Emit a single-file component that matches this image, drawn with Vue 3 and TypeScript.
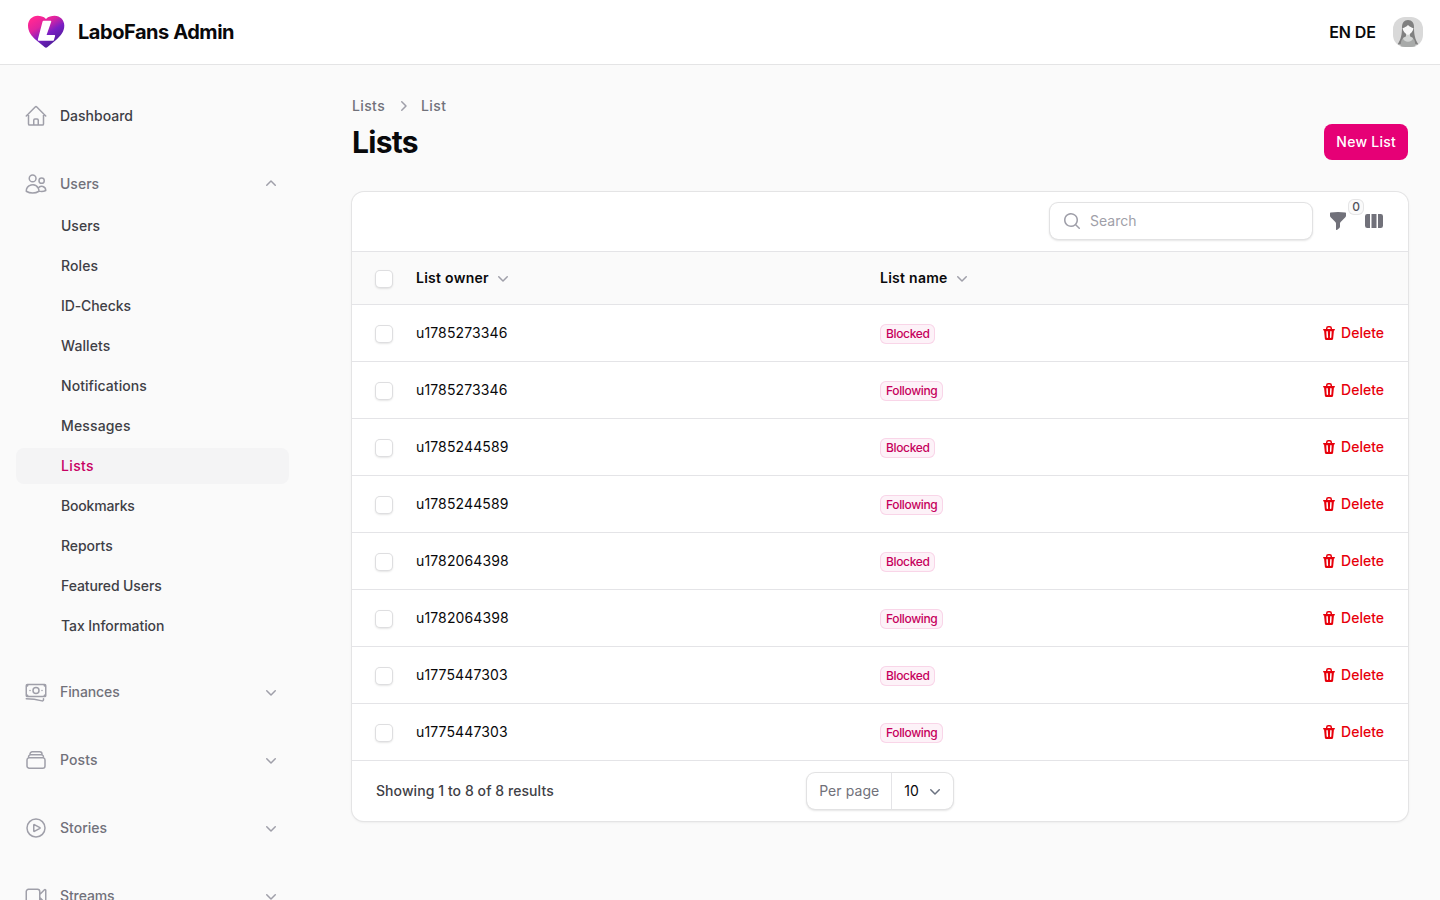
<script setup lang="ts">
interface NavItem { label: string; tracking: number }
interface Group extends NavItem { icon: string }
interface Row { owner: string; list: 'Blocked' | 'Following' }

const icons = {
  home: 'M2.25 12l8.954-8.955c.44-.439 1.152-.439 1.591 0L21.75 12M4.5 9.75v10.125c0 .621.504 1.125 1.125 1.125H9.75v-4.875c0-.621.504-1.125 1.125-1.125h2.25c.621 0 1.125.504 1.125 1.125V21h4.125c.621 0 1.125-.504 1.125-1.125V9.75M8.25 21h8.25',
  users: 'M15 19.128a9.38 9.38 0 002.625.372 9.337 9.337 0 004.121-.952 4.125 4.125 0 00-7.533-2.493M15 19.128v-.003c0-1.113-.285-2.16-.786-3.07M15 19.128v.106A12.318 12.318 0 018.624 21c-2.331 0-4.512-.645-6.374-1.766l-.001-.109a6.375 6.375 0 0111.964-3.07M12 6.375a3.375 3.375 0 11-6.75 0 3.375 3.375 0 016.75 0zm8.25 2.25a2.625 2.625 0 11-5.25 0 2.625 2.625 0 015.25 0z',
  banknotes: 'M2.25 18.75a60.07 60.07 0 0115.797 2.101c.727.198 1.453-.342 1.453-1.096V18.75M3.75 4.5v.75A.75.75 0 013 6h-.75m0 0v-.375c0-.621.504-1.125 1.125-1.125H20.25M2.25 6v9m18-10.5v.75c0 .414.336.75.75.75h.75m-1.5-1.5h.375c.621 0 1.125.504 1.125 1.125v9.75c0 .621-.504 1.125-1.125 1.125h-.375m1.5-1.5H21a.75.75 0 00-.75.75v.75m0 0H3.75m0 0h-.375a1.125 1.125 0 01-1.125-1.125V15m1.5 1.5v-.75A.75.75 0 003 15h-.75M15 10.5a3 3 0 11-6 0 3 3 0 016 0zm3 0h.008v.008H18V10.5zm-12 0h.008v.008H6V10.5z',
  stack: 'M6 6.878V6a2.25 2.25 0 012.25-2.25h7.5A2.25 2.25 0 0118 6v.878m-12 0c.235-.083.487-.128.75-.128h10.5c.263 0 .515.045.75.128m-12 0A2.25 2.25 0 004.5 9v.878m13.5-3A2.25 2.25 0 0119.5 9v.878m0 0a2.246 2.246 0 00-.75-.128H5.25c-.263 0-.515.045-.75.128m15 0A2.25 2.25 0 0121 12v6a2.25 2.25 0 01-2.25 2.25H5.25A2.25 2.25 0 013 18v-6c0-.98.626-1.813 1.5-2.122',
  play: 'M21 12a9 9 0 11-18 0 9 9 0 0118 0z M15.91 11.672a.375.375 0 010 .656l-5.603 3.113a.375.375 0 01-.557-.328V8.887c0-.286.307-.466.557-.327l5.603 3.112z',
  video: 'M15.75 10.5l4.72-4.72a.75.75 0 011.28.53v11.38a.75.75 0 01-1.28.53l-4.72-4.72M4.5 18.75h9a2.25 2.25 0 002.25-2.25v-9a2.25 2.25 0 00-2.25-2.25h-9A2.25 2.25 0 002.25 7.5v9a2.25 2.25 0 002.25 2.25z',
  down: 'M5.22 8.22a.75.75 0 011.06 0L10 11.94l3.72-3.72a.75.75 0 111.06 1.06l-4.25 4.25a.75.75 0 01-1.06 0L5.22 9.28a.75.75 0 010-1.06z',
  up: 'M9.47 6.47a.75.75 0 0 1 1.06 0l4.25 4.25a.75.75 0 1 1-1.06 1.06L10 8.06l-3.72 3.72a.75.75 0 0 1-1.06-1.06l4.25-4.25Z',
  right: 'M8.22 5.22a.75.75 0 0 1 1.06 0l4.25 4.25a.75.75 0 0 1 0 1.06l-4.25 4.25a.75.75 0 0 1-1.06-1.06L11.94 10 8.22 6.28a.75.75 0 0 1 0-1.06Z',
  search: 'M9 3.5a5.5 5.5 0 100 11 5.5 5.5 0 000-11zM2 9a7 7 0 1112.452 4.391l3.328 3.329a.75.75 0 11-1.06 1.06l-3.329-3.328A7 7 0 012 9z',
  funnel: 'M2.628 1.601C5.028 1.206 7.49 1 10 1s4.973.206 7.372.601a.75.75 0 01.628.74v2.288a2.25 2.25 0 01-.659 1.59l-4.682 4.683a2.25 2.25 0 00-.659 1.59v3.037c0 .684-.31 1.33-.844 1.757l-1.937 1.55A.75.75 0 018 18.25v-5.757a2.25 2.25 0 00-.659-1.591L2.659 6.22A2.25 2.25 0 012 4.629V2.34a.75.75 0 01.628-.74z',
  columns: 'M14 17h2.75A2.25 2.25 0 0019 14.75v-9.5A2.25 2.25 0 0016.75 3H14v14zM12.5 3h-5v14h5V3zM3.25 3H6v14H3.25A2.25 2.25 0 011 14.75v-9.5A2.25 2.25 0 013.25 3z',
  trash: 'M5 3.25V4H2.75a.75.75 0 0 0 0 1.5h.3l.815 8.15A1.5 1.5 0 0 0 5.357 15h5.285a1.5 1.5 0 0 0 1.493-1.35l.815-8.15h.3a.75.75 0 0 0 0-1.5H11v-.75A2.25 2.25 0 0 0 8.75 1h-1.5A2.25 2.25 0 0 0 5 3.25Zm2.25-.75a.75.75 0 0 0-.75.75V4h3v-.75a.75.75 0 0 0-.75-.75h-1.5ZM6.05 6a.75.75 0 0 1 .787.713l.275 5.5a.75.75 0 0 1-1.498.075l-.275-5.5A.75.75 0 0 1 6.05 6Zm3.9 0a.75.75 0 0 1 .712.787l-.275 5.5a.75.75 0 0 1-1.498-.075l.275-5.5a.75.75 0 0 1 .786-.711Z',
}

const userItems: NavItem[] = [
  { label: 'Users', tracking: 0 },
  { label: 'Roles', tracking: 0.1 },
  { label: 'ID-Checks', tracking: -0.1 },
  { label: 'Wallets', tracking: 0.1 },
  { label: 'Notifications', tracking: 0.06 },
  { label: 'Messages', tracking: 0.15 },
  { label: 'Lists', tracking: 0.35 },
  { label: 'Bookmarks', tracking: -0.18 },
  { label: 'Reports', tracking: -0.05 },
  { label: 'Featured Users', tracking: -0.1 },
  { label: 'Tax Information', tracking: -0.07 },
]
const active = 'Lists'

const groups: Group[] = [
  { label: 'Finances', icon: icons.banknotes, tracking: -0.1 },
  { label: 'Posts', icon: icons.stack, tracking: 0.1 },
  { label: 'Stories', icon: icons.play, tracking: 0 },
  { label: 'Streams', icon: icons.video, tracking: -0.1 },
]

const owners = ['u1785273346', 'u1785244589', 'u1782064398', 'u1775447303']
const rows: Row[] = owners.flatMap((owner): Row[] => [
  { owner, list: 'Blocked' },
  { owner, list: 'Following' },
])
</script>

<template>
  <div class="app">
    <header class="topbar">
      <div class="brand">
        <svg class="logo" viewBox="0 0 38 34">
          <defs>
            <linearGradient id="heart" x1="0.15" y1="0.1" x2="0.7" y2="0.9">
              <stop offset="0" stop-color="#ff2793" />
              <stop offset="0.3" stop-color="#e0249f" />
              <stop offset="0.62" stop-color="#7a1fc4" />
              <stop offset="1" stop-color="#4f1d9a" />
            </linearGradient>
          </defs>
          <path fill="url(#heart)" d="M19 4C16.5 1.4 13.500.8 10.700.8 5.200.8 1 5 1 10.600c0 6 3.300 10.400 8 14.400l8.500 7.100q1.500 1.100 3 0L29 25c4.700-4 8.300-8.400 8.300-14.400C37.300 5 33.100.8 27.600.8 24.500.8 21.500 1.400 19 4Z" />
          <path fill="#fff" d="M16.700 5.800h6.900q.9 0 .6.9L19.600 20h7.700q1.100 0 .8 1l-1.200 3.900q-.3.900-1.200.9H12q-1.600 0-1.100-1.500l4.600-17.500q.3-1 1.200-1z" />
        </svg>
        <span class="brand-name">LaboFans Admin</span>
      </div>
      <div class="topbar-end">
        <span class="langs">EN DE</span>
        <svg class="avatar" viewBox="0 0 30 30">
          <defs><clipPath id="round"><rect width="30" height="30" rx="12" /></clipPath></defs>
          <g clip-path="url(#round)">
            <rect width="30" height="30" fill="#d9d9d9" />
            <path fill="#808080" d="M15 3c-4 0-6 3-6 7 0 7-.8 12-4.500 17.500h21C21.800 22 21 17 21 10c0-4-2-7-6-7z" />
            <path fill="#a8aaa9" d="M7.500 30c0-6 1.500-9 5-10.500h5c3.500 1.500 5 4.500 5 10.500z" />
            <path fill="#d2d4d3" d="M13 16h4v3.500l3 1.500c-.5 5-9.500 5-10 0l3-1.500z" />
            <path fill="#f7f7f7" d="M15 8c1.800 1.800 3.500 2.700 5.500 3.200-.5 3.300-3 6-5.500 6.800-2.500-.8-5-3.500-5.500-6.800C11.500 10.700 13.200 9.800 15 8z" />
          </g>
        </svg>
      </div>
    </header>

    <div class="body">
      <nav class="sidebar">
        <a class="nav-item">
          <svg class="nav-icon" viewBox="0 0 24 24"><path :d="icons.home" /></svg>
          <span>Dashboard</span>
        </a>
        <section class="group">
          <div class="nav-item group-head">
            <svg class="nav-icon" viewBox="0 0 24 24"><path :d="icons.users" /></svg>
            <span>Users</span>
            <svg class="solid chevron" viewBox="0 0 20 20"><path :d="icons.up" /></svg>
          </div>
          <ul class="sub">
            <li
              v-for="item in userItems"
              :key="item.label"
              class="sub-item"
              :class="{ active: item.label === active }"
              :style="{ letterSpacing: item.tracking + 'px' }"
            >{{ item.label }}</li>
          </ul>
        </section>
        <div v-for="g in groups" :key="g.label" class="nav-item group-head">
          <svg class="nav-icon" viewBox="0 0 24 24"><path :d="g.icon" /></svg>
          <span :style="{ letterSpacing: g.tracking + 'px' }">{{ g.label }}</span>
          <svg class="solid chevron" viewBox="0 0 20 20"><path :d="icons.down" /></svg>
        </div>
      </nav>

      <main class="main">
        <div class="crumbs">
          <span>Lists</span>
          <svg class="solid chevron" viewBox="0 0 20 20"><path :d="icons.right" /></svg>
          <span>List</span>
        </div>
        <div class="heading">
          <h1>Lists</h1>
          <button class="primary">New List</button>
        </div>

        <div class="card">
          <div class="toolbar">
            <div class="search">
              <svg class="solid search-icon" viewBox="0 0 20 20"><path :d="icons.search" /></svg>
              <span>Search</span>
            </div>
            <div class="filter">
              <svg class="solid tool" viewBox="0 0 20 20"><path :d="icons.funnel" /></svg>
              <span class="count">0</span>
            </div>
            <svg class="solid tool" viewBox="0 0 20 20"><path :d="icons.columns" /></svg>
          </div>

          <div class="row head">
            <span class="check"></span>
            <span class="owner">List owner <svg class="solid sort" viewBox="0 0 20 20"><path :d="icons.down" /></svg></span>
            <span class="list">List name <svg class="solid sort" viewBox="0 0 20 20"><path :d="icons.down" /></svg></span>
          </div>
          <div v-for="(row, i) in rows" :key="i" class="row">
            <span class="check"></span>
            <span class="owner">{{ row.owner }}</span>
            <span class="list"><span class="badge">{{ row.list }}</span></span>
            <a class="delete"><svg class="solid" viewBox="0 0 16 16"><path fill-rule="evenodd" :d="icons.trash" /></svg>Delete</a>
          </div>

          <div class="footer">
            <span class="summary">Showing 1 to 8 of 8 results</span>
            <div class="per-page">
              <span class="per-label">Per page</span>
              <span class="per-value">10 <svg class="solid" viewBox="0 0 20 20"><path :d="icons.down" /></svg></span>
            </div>
          </div>
        </div>
      </main>
    </div>
  </div>
</template>

<style>
body { background: #fafafa; overflow: hidden; }
</style>

<style scoped>
* { box-sizing: border-box; }
.app {
  height: 900px;
  overflow: hidden;
  background: #fafafa;
  color: #09090b;
  font-family: Inter, "Liberation Sans", sans-serif;
  font-size: 14px;
  line-height: 20px;
}
svg { display: block; flex: none; }
.solid { fill: currentColor; width: 20px; height: 20px; }
.solid path { fill-rule: evenodd; }
.topbar {
  height: 65px;
  padding: 0 17px 1px 27px;
  display: flex;
  align-items: center;
  justify-content: space-between;
  background: #fff;
  border-bottom: 1px solid #e4e4e5;
}
.brand { display: flex; align-items: center; gap: 13px; }
.logo { width: 38px; height: 34px; }
.brand-name { font-size: 20px; line-height: 28px; font-weight: 700; letter-spacing: -0.45px; }
.topbar-end { display: flex; align-items: center; gap: 17px; }
.langs { font-size: 16px; line-height: 24px; font-weight: 600; letter-spacing: -0.05px; }
.avatar { width: 30px; height: 30px; }
.body { display: flex; height: 835px; }
.sidebar {
  width: 320px;
  flex: none;
  padding: 33px 31px 0 16px;
  display: flex;
  flex-direction: column;
  gap: 32px;
}
.nav-item {
  height: 36px;
  flex: none;
  padding: 0 8px;
  display: flex;
  align-items: center;
  gap: 12px;
  color: #3f3f46;
  font-weight: 500;
}
.group-head { color: #71717a; }
.nav-icon { width: 24px; height: 24px; fill: none; stroke: #9f9fa9; stroke-width: 1.5; stroke-linecap: round; stroke-linejoin: round; }
.chevron { color: #9f9fa9; }
.nav-item .chevron { margin-left: auto; }
.group { margin-bottom: -2px; }
.sub { list-style: none; margin: 6px 0 0; padding: 0; display: flex; flex-direction: column; gap: 4px; }
.sub-item { height: 36px; padding: 8px 8px 8px 45px; border-radius: 8px; color: #3f3f46; font-weight: 500; }
.sub-item.active { background: #f4f4f5; color: #c70063; }
.main { flex: 1; padding: 31px 32px 0; }
.crumbs { display: flex; align-items: center; gap: 8px; color: #71717a; font-weight: 500; letter-spacing: 0.38px; }
.heading { margin-top: 8px; height: 36px; display: flex; align-items: center; justify-content: space-between; }
h1 { margin: 0; font-size: 30px; line-height: 36px; font-weight: 700; letter-spacing: -0.7px; }
.primary { height: 36px; padding: 0 12px; border: 0; border-radius: 8px; background: #e60076; color: #fff; font: inherit; font-weight: 500; letter-spacing: 0.25px; }
.card {
  margin-top: 32px;
  height: 629px;
  background: #fff;
  border-radius: 12px;
  box-shadow: 0 0 0 1px #e4e4e5, 0 1px 3px rgba(0, 0, 0, .1);
}
.toolbar { height: 59px; padding: 0 24px 1px; display: flex; align-items: center; justify-content: flex-end; gap: 16px; color: #71717a; }
.search {
  width: 262px;
  height: 36px;
  padding: 0 12px;
  display: flex;
  align-items: center;
  gap: 8px;
  border-radius: 8px;
  box-shadow: 0 0 0 1px #e2e2e3, 0 1px 2px 1px rgba(0, 0, 0, .1);
  color: #9f9fa9;
}
.filter { position: relative; }
.count {
  position: absolute;
  left: 20px;
  top: -12px;
  width: 16px;
  height: 16px;
  border-radius: 6px;
  background: #fafafa;
  box-shadow: inset 0 0 0 1px #e5e5e6;
  color: #52525c;
  font-size: 12px;
  line-height: 16px;
  font-weight: 500;
  text-align: center;
}
.row {
  height: 57px;
  padding: 0 24px;
  display: grid;
  grid-template-columns: 40px 464px 1fr auto;
  align-items: center;
  border-top: 1px solid #e4e4e7;
}
.head { height: 53px; background: #fafafa; font-weight: 600; letter-spacing: 0.27px; }
.owner, .list { display: flex; align-items: center; gap: 4px; }
.row:not(.head) .owner { letter-spacing: 0.13px; }
.sort { color: #9f9fa9; }
.check { width: 16px; height: 16px; border-radius: 4px; background: #fff; position: relative; top: 1px; box-shadow: 0 0 0 1px #dedee0, 0 1px 2px 1px rgba(0, 0, 0, .1); }
.badge {
  height: 20px;
  margin-top: 2px;
  padding: 0 6px;
  border-radius: 6px;
  background: #fdf2f8;
  box-shadow: inset 0 0 0 1px #f9d5e8;
  color: #c6005c;
  font-size: 12px;
  line-height: 20px;
  font-weight: 500;
  letter-spacing: -0.36px;
}
.delete { display: flex; align-items: center; gap: 4px; color: #e7000b; font-weight: 500; }
.delete svg { width: 16px; height: 16px; }
.footer {
  height: 61px;
  padding: 0 24px;
  display: grid;
  grid-template-columns: 1fr auto 1fr;
  align-items: center;
  border-top: 1px solid #e4e4e7;
}
.summary { color: #3f3f46; font-weight: 500; letter-spacing: 0.07px; }
.per-page { display: flex; height: 36px; border-radius: 8px; box-shadow: 0 0 0 1px #e2e2e3, 0 1px 2px 1px rgba(0, 0, 0, .1); }
.per-label { padding: 8px 12px; color: #71717a; border-right: 1px solid #e4e4e7; letter-spacing: 0.07px; }
.per-value { display: flex; align-items: center; gap: 6px; padding: 0 8px 0 12px; }
.per-value svg { color: #6b7280; }
</style>
